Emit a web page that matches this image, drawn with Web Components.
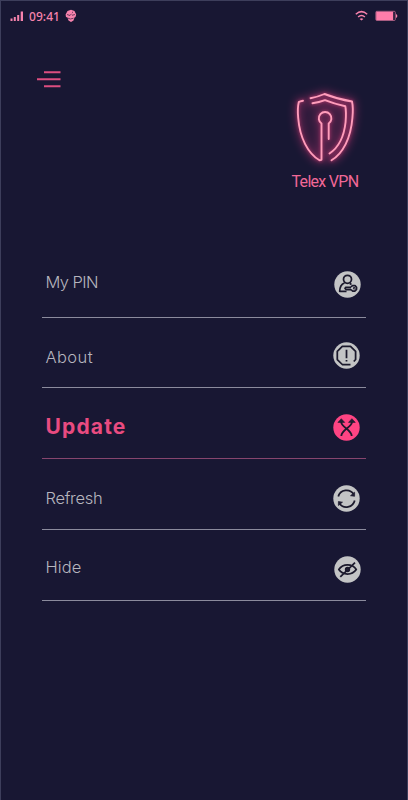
<!DOCTYPE html>
<html lang="en">
<head>
<meta charset="utf-8">
<title>Telex VPN</title>
<style>
html,body{margin:0;height:100%;background:#181733}
body{font-family:Inter,"Open Sans",sans-serif}
</style>
</head>
<body>
<vpn-screen>
  <status-bar slot="status"></status-bar>
  <menu-button slot="menu"></menu-button>
  <brand-mark slot="brand">Telex VPN</brand-mark>
  <menu-row style="--h:71px;--ty:-1px;--iy:2px;--ir:5px;--ls:-.6px">My PIN<menu-icon slot="icon" name="pin"></menu-icon></menu-row>
  <menu-row style="--h:70px;--ty:3px;--iy:3px;--ir:6px;--ls:.4px">About<menu-icon slot="icon" name="about"></menu-icon></menu-row>
  <menu-row active style="--h:71px;--ty:2.500px;--iy:4px;--ir:6px">Update<menu-icon slot="icon" name="update" style="--disc:#fe4483"></menu-icon></menu-row>
  <menu-row style="--h:71px;--ty:3px;--iy:4px;--ir:6.3px;--ls:-.3px">Refresh<menu-icon slot="icon" name="refresh"></menu-icon></menu-row>
  <menu-row style="--h:71px;--ty:1px;--iy:4px;--ir:5px;--ls:.1px">Hide<menu-icon slot="icon" name="hide"></menu-icon></menu-row>
</vpn-screen>
<script>
function define(name, html) {
  customElements.define(name, class extends HTMLElement {
    constructor() {
      super();
      this.attachShadow({ mode: 'open' }).innerHTML = html;
    }
  });
}

define('vpn-screen', `
<style>
:host{display:flex;flex-direction:column;box-sizing:border-box;width:408px;height:800px;background:#181733;border:solid #3d3e5b;border-width:1px 1px 0 1px;overflow:hidden}
header{display:flex;justify-content:space-between;align-items:flex-start;height:216px;box-sizing:border-box;padding:40px 37px 0 36px}
nav{padding:0 41px}
</style>
<slot name="status"></slot>
<header><slot name="menu"></slot><slot name="brand"></slot></header>
<nav><slot></slot></nav>`);

define('status-bar', `
<style>
:host{display:flex;align-items:center;height:30px;padding:0 9px;color:#f783ad;font:500 12px "Noto Sans","Open Sans",sans-serif}
.time{margin-left:5px;letter-spacing:.05px}
svg{display:block}
.bug{margin-left:5px}
.wifi{margin-left:auto}
.battery{margin-left:7px}
</style>
<svg width="14" height="12" fill="#f783ad"><path d="M.5 8.500h2V11h-2zM3.800 7h2v4h-2zM7.200 5h2v6h-2zM10.700 1.500H13V11h-2.300z"/></svg>
<span class="time">09:41</span>
<svg class="bug" width="12" height="14"><path d="M2.500 2 6 .8 9.500 2 11.200 5.500 10.500 8 9.500 8.500 8.500 11.500 6 13 3.500 11.500 2.500 8.500 1 8 .6 5.500z" fill="#f783ad"/><path d="M2 5.500 5 6.500 6.500 4.800M7 6.300 10 5.500M3 9.200 5.500 10 8.500 9.200M7 3l1 .6" fill="none" stroke="#4b2848" stroke-width=".8"/></svg>
<svg class="wifi" width="13" height="12" fill="none" stroke="#f783ad" stroke-width="1.500"><path d="M.8 4.200Q6.500-.9 12.200 4.200M3.100 7Q6.500 4 9.900 7"/><path d="M4.600 8.900Q6.500 7.400 8.400 8.900L6.500 10.600z" fill="#f783ad" stroke="none"/></svg>
<svg class="battery" width="23" height="12"><rect x=".8" y="1.300" width="19.500" height="9.200" rx="1" fill="#181733" stroke="#c26b90" stroke-width=".8"/><path d="M1.200 1.700H18.200V10.100H1.200z" fill="#ff7daa"/><path d="M21 4v4l1.200-1V5z" fill="#f783ad"/></svg>`);

define('menu-button', `
<style>:host{display:block;width:24px;height:18px}svg{display:block}</style>
<svg width="24" height="18" stroke="#dd4e80" stroke-width="1.900"><path d="M7 1.200H23.500M0 8.300H23.500M7 15.300H23.500"/></svg>`);

define('brand-mark', `
<style>
:host{display:flex;flex-direction:column;align-items:center;width:100px;margin:9px -8px 0 0;color:#f16897;font:400 16px/20px Roboto,sans-serif;letter-spacing:-.7px;white-space:nowrap}
svg{display:block;overflow:visible;margin-bottom:1px}
.name{margin-left:-6px}
.halo{filter:blur(4.500px);opacity:.34}
.near{filter:blur(1.500px);opacity:.45}
</style>
<svg width="100" height="91" viewBox="278 80 100 91" fill="none">
<defs><g id="shield" stroke-linecap="round" stroke-linejoin="round">
<path d="M303 100.700Q300 101.200 298.800 102C297.600 107 297.600 112 298.200 118C299.800 138 308 153.500 319.500 160.300L321.500 159.800V123.500A6.300 6.300 0 1 1 328.700 123.500V139"/>
<path d="M310.500 98.200Q318 96.800 324.500 94Q337 99 352 101.500C353 106 353 112 352.400 118C350.800 138 343 153.500 331.500 160.200"/>
<path d="M312.500 103.300Q319 102.400 325 100.200Q334 103.800 345.300 106.300C346.300 111 346 117 345.600 122C344 137 338.500 147.500 329.500 153.500"/>
</g></defs>
<path d="M298 101Q313 99 325 94Q337 99 353 102C354 137 345 155 325 163 306 154 298 132 298 101" fill="#a52c65" opacity=".14" style="filter:blur(5px)"/>
<use href="#shield" class="halo" stroke="#e43f82" stroke-width="7"/>
<use href="#shield" class="near" stroke="#ce3c73" stroke-width="3.500"/>
<use href="#shield" stroke="#ff9dbb" stroke-width="1.900"/>
</svg>
<span class="name"><slot></slot></span>`);

define('menu-row', `
<style>
:host{display:flex;justify-content:space-between;align-items:center;box-sizing:border-box;width:324px;height:var(--h);border-bottom:1.500px solid #8b8b9d;color:#b6b5be;font-weight:300;font-size:16.500px;letter-spacing:var(--ls,0)}
:host([active]){border-color:#86456e;color:#e94b80;font-weight:700;font-size:21px;letter-spacing:1.150px}
.label{padding:calc(var(--ty)*2 + 2px) 0 0 3.500px}
.icon{padding:calc(var(--iy)*2) var(--ir) 0 0}
</style>
<span class="label"><slot></slot></span><span class="icon"><slot name="icon"></slot></span>`);

const glyphs = {
  pin: '<circle cx="13.500" cy="8.300" r="4"/><path d="M10.500 12C7.500 13.200 5.700 16 5.700 20.300H12.500M15.800 12.400 17.500 13.400"/><path d="M17 16.300H11.800L11 17.500 12 18.500H17"/><path d="M17 16 18.500 14.500H21L22.500 16.300V18.300L21 20H18.500L17 18.500"/><circle cx="20.200" cy="17.300" r=".4"/>',
  about: '<path d="M17.500 22.500H9.300L4.300 17.600V9.300L9.300 4.300H17.500L22.600 9.300V17.500L20.800 19.500"/><path d="M13.500 7.800V16.200M13.500 18V19.600"/>',
  update: '<path d="M8.300 6.500V8.200C8.300 13 18.700 16 18.700 22M18.900 6.500V8.200C18.900 13 8.300 16 8.300 22" stroke-width="1.800"/><path d="M4.900 8.400 8.300 4.700 11.700 8.400zM15.500 8.400 18.900 4.700 22.300 8.400z" fill="#211f35" stroke-width=".6"/>',
  refresh: '<path d="M5.300 11.600A8.500 8.500 0 0 1 20.800 9.500M21.700 15.500A8.500 8.500 0 0 1 6.500 18.500"/><path d="M21.600 7.200V11.300L17.500 10.700zM5.400 20.500V16.500L9.500 17.200z" fill="#211f35" stroke-width=".7"/>',
  hide: '<path d="M4.800 13.500C9 7.500 18 7.300 22.300 13.500 18 19.500 9 19.500 4.800 13.500zM6.300 20.800 21 6.700"/><circle cx="13.500" cy="13.500" r="1.800" fill="#211f35"/>'
};
customElements.define('menu-icon', class extends HTMLElement {
  constructor() {
    super();
    this.attachShadow({ mode: 'open' });
  }
  connectedCallback() {
    this.shadowRoot.innerHTML = `
<style>:host{display:block;width:27px;height:27px}svg{display:block}.disc{fill:var(--disc,#c3c4c5)}</style>
<svg width="27" height="27" viewBox="0 0 27 27"><circle class="disc" cx="13.500" cy="13.500" r="13.200"/><g fill="none" stroke="#1b192c" stroke-width="1.750" stroke-linejoin="round">${glyphs[this.getAttribute('name')]}</g></svg>`;
  }
});
</script>
</body>
</html>
